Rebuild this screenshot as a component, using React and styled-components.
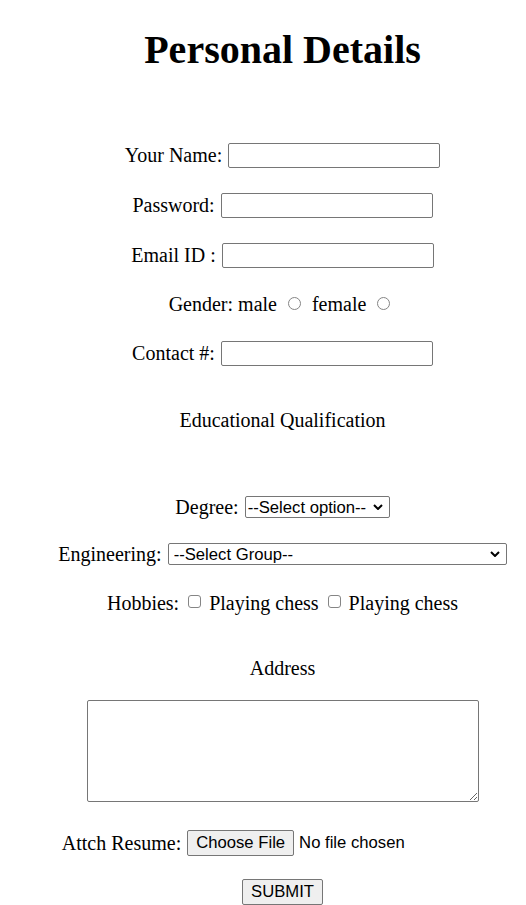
import styled, { createGlobalStyle } from 'styled-components';

const GlobalStyle = createGlobalStyle`
    html, body {
        margin: 0;
        padding: 0;
        background: #fff;
        overflow-x: hidden;
    }
    body {
        font-family: "Liberation Serif", "Times New Roman", serif;
        font-size: 20px;
        color: #000;
    }
`

const chevron = "data:image/svg+xml,%3Csvg xmlns='http://www.w3.org/2000/svg' width='10' height='6' viewBox='0 0 10 6'%3E%3Cpath d='M1 1l4 4 4-4' fill='none' stroke='%23000' stroke-width='2'/%3E%3C/svg%3E";

function App() {
    return (
        <>
            <GlobalStyle />
            <Page>
                <Title>Personal Details</Title>

                <Row $top={69}>
                    <span>Your Name:</span>
                    <TextInput type="text" />
                </Row>
                <Row $top={24}>
                    <span>Password:</span>
                    <TextInput type="password" />
                </Row>
                <Row $top={24}>
                    <span>Email ID :</span>
                    <TextInput type="email" />
                </Row>
                <Row $top={23}>
                    <span>Gender: male</span>
                    <Radio type="radio" name="gender" />
                    <span>female</span>
                    <Radio type="radio" name="gender" />
                </Row>
                <Row $top={23}>
                    <span>Contact #:</span>
                    <TextInput type="tel" />
                </Row>

                <Row $top={41}>Educational Qualification</Row>

                <Row $top={61}>
                    <span>Degree:</span>
                    <Select $pad={2} defaultValue="">
                        <option value="">--Select option--</option>
                    </Select>
                </Row>
                <Row $top={21}>
                    <span>Engineering:</span>
                    <Select $pad={5} $width={339} defaultValue="">
                        <option value="">--Select Group--</option>
                    </Select>
                </Row>
                <Row $top={23}>
                    <span>Hobbies:</span>
                    <Check type="checkbox" />
                    <span>Playing chess</span>
                    <Check type="checkbox" />
                    <span>Playing chess</span>
                </Row>

                <Row $top={39}>Address</Row>
                <Address />

                <Row $top={28}>
                    <span>Attch Resume:</span>
                    <FileInput type="file" />
                </Row>
                <Row $top={23}>
                    <Submit type="submit">SUBMIT</Submit>
                </Row>
            </Page>
        </>
    );
}

const Page = styled.form`
    box-sizing: border-box;
    width: 526px;
    padding: 27px 0 0 39px;
    display: flex;
    flex-direction: column;
    align-items: center;
`
const Title = styled.h1`
    margin: 0;
    font-size: 40px;
    line-height: 46px;
    font-weight: bold;
`
const Row = styled.div`
    display: flex;
    align-items: center;
    justify-content: center;
    gap: 5px;
    height: 26px;
    line-height: 26px;
    margin-top: ${p => p.$top}px;
    white-space: nowrap;
`
const TextInput = styled.input`
    box-sizing: border-box;
    width: 212px;
    height: 25px;
    margin: 0 0 0 1px;
    padding: 1px 3px;
    border: 1px solid #767676;
    border-radius: 2px;
    background: #fff;
    font: 16.67px "Liberation Sans", Arial, sans-serif;
`
const Radio = styled.input`
    appearance: none;
    box-sizing: border-box;
    flex: none;
    width: 13px;
    height: 13px;
    margin: 0 6px 2px 6px;
    border: 1px solid #858585;
    border-radius: 50%;
    background: #fff;
`
const Check = styled.input`
    appearance: none;
    box-sizing: border-box;
    flex: none;
    width: 13px;
    height: 13px;
    margin: 0 3px 4px 4px;
    border: 1px solid #858585;
    border-radius: 3px;
    background: #fff;
`
const Select = styled.select`
    appearance: none;
    box-sizing: border-box;
    width: ${p => p.$width || 145}px;
    height: 22px;
    margin-left: 1px;
    padding: 0 22px 0 ${p => p.$pad}px;
    border: 1px solid #767676;
    border-radius: 2px;
    color: #000;
    background: #fff url("${chevron}") no-repeat right 6px center;
    font: 16.67px "Liberation Sans", Arial, sans-serif;
`
const Address = styled.textarea`
    box-sizing: border-box;
    width: 392px;
    height: 102px;
    margin: 19px 0 0 0;
    border: 1px solid #767676;
    border-radius: 2px;
    font: 16.67px "Liberation Mono", monospace;
`
const FileInput = styled.input`
    box-sizing: border-box;
    width: 316px;
    margin-left: 1px;
    font: 16.67px "Liberation Sans", Arial, sans-serif;
    color: #000;
    &::file-selector-button {
        height: 26px;
        margin-right: 5px;
        padding: 1px 8px;
        border: 1px solid #767676;
        border-radius: 2px;
        background: #efefef;
        font: 16.67px "Liberation Sans", Arial, sans-serif;
        color: #000;
    }
`
const Submit = styled.button`
    box-sizing: border-box;
    height: 26px;
    padding: 1px 8px;
    border: 1px solid #767676;
    border-radius: 2px;
    background: #efefef;
    font: 16.67px "Liberation Sans", Arial, sans-serif;
    color: #000;
`

export default App;
